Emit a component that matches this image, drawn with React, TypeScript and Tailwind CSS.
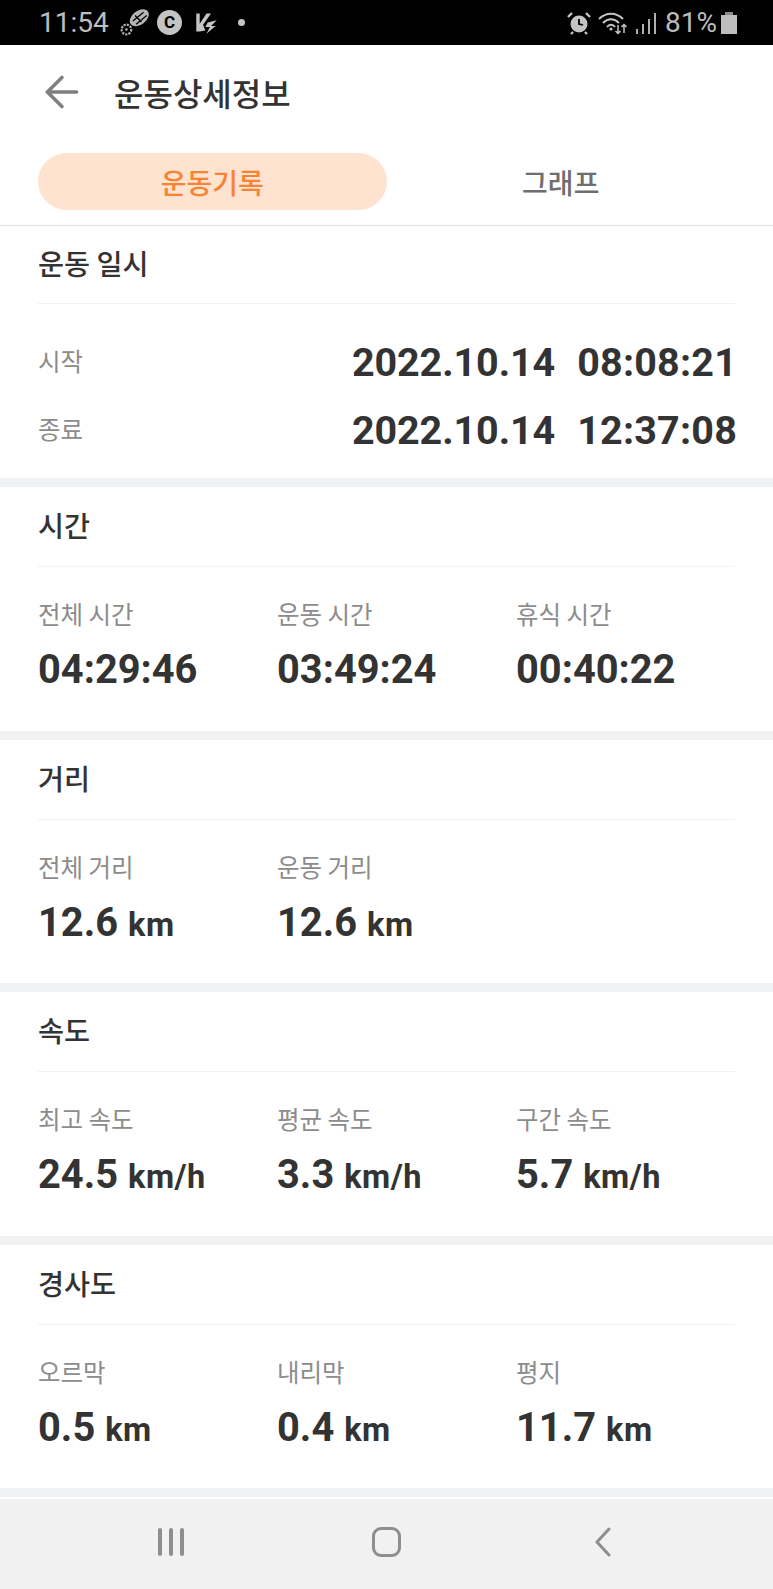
import { ArrowLeft } from "lucide-react";

const krFont = "font-['Noto_Sans_CJK_KR','Noto_Sans',sans-serif]";
const numFont = "font-['Roboto','Noto_Sans_CJK_KR',sans-serif]";

function StatusBar() {
  return (
    <div className="h-[45px] bg-black flex items-center justify-between pl-[39px] pr-[36px] text-[#bdbdbd] font-['Roboto',sans-serif]">
      <div className="flex items-center">
        <span className="text-[28px] leading-none w-[81px]">11:54</span>
        <svg width="30" height="28" viewBox="0 0 28 26" className="mt-[-2px]">
          <ellipse cx="18" cy="9" rx="10" ry="6.5" transform="rotate(-38 18 9)" fill="#b5b5b5" />
          <path d="M12 12 L22 4 M15 15 L25 7 M14 7 L20 13" stroke="#000" strokeWidth="1.2" />
          <circle cx="6" cy="20" r="4.5" fill="none" stroke="#b5b5b5" strokeWidth="2" strokeDasharray="2 1" />
          <circle cx="6" cy="20" r="1.2" fill="#b5b5b5" />
        </svg>
        <div className="ml-[7px] w-[25px] h-[25px] rounded-full bg-[#c4c4c4] flex items-center justify-center text-black text-[17px] font-bold leading-none">
          C
        </div>
        <svg width="25" height="25" viewBox="0 0 22 22" className="ml-[12px]">
          <path d="M2 3 L5 3 L5 19 L2 19 Z M5 12 L11 3 L15 3 L8 13 L10 18 L5 19 Z" fill="#c4c4c4" />
          <path d="M12 11 L20 9 L15 14 L19 14 L11 21 L14 15 L10 15 Z" fill="#c4c4c4" />
        </svg>
        <div className="ml-[19px] w-[7px] h-[7px] rounded-full bg-[#c4c4c4]" />
      </div>
      <div className="flex items-center">
        <svg width="26" height="24" viewBox="0 0 26 24" fill="none">
          <circle cx="13" cy="13" r="8.5" fill="#c4c4c4" />
          <path d="M13 8 L13 13 L17 14" stroke="#000" strokeWidth="1.8" />
          <path d="M2 6 L6 2 M24 6 L20 2 M7 21 L5 23 M19 21 L21 23" stroke="#c4c4c4" strokeWidth="2.4" />
        </svg>
        <svg width="32" height="24" viewBox="0 0 32 24" fill="none" className="ml-[5px]" stroke="#c4c4c4">
          <path d="M2 8 C9 1 19 1 26 8" strokeWidth="2" />
          <path d="M6 12 C11 7 17 7 22 12" strokeWidth="2" />
          <path d="M10 16 C12 13 16 13 18 16" strokeWidth="2" />
          <circle cx="14" cy="18" r="1.6" fill="#c4c4c4" stroke="none" />
          <path d="M21 14 V22 M18.5 20 L21 22.5 L23.5 20 M27 22 V14 M24.5 16 L27 13.5 L29.5 16" strokeWidth="1.5" />
        </svg>
        <div className="ml-[7px] flex items-end gap-[4px] h-[22px]">
          <div className="w-[2px] h-[5px] bg-[#b0b0b0]" />
          <div className="w-[2px] h-[10px] bg-[#b0b0b0]" />
          <div className="w-[2px] h-[15px] bg-[#b0b0b0]" />
          <div className="w-[2px] h-[21px] bg-[#b0b0b0]" />
        </div>
        <span className="ml-[9px] text-[28px] leading-none">81%</span>
        <div className="ml-[4px] flex flex-col items-center">
          <div className="w-[8px] h-[3px] bg-[#8a8a8a]" />
          <div className="w-[16px] h-[19px] bg-[#bdbdbd]" />
        </div>
      </div>
    </div>
  );
}

function SectionHead({ title, heightClass }: { title: string; heightClass: string }) {
  return (
    <div className={`mx-[38px] border-b border-[#f1f2f3] flex items-center pb-[2px] ${heightClass}`}>
      <h2 className={`text-[28.3px] leading-none font-medium text-[#333] ${krFont}`}>{title}</h2>
    </div>
  );
}

function Value({ num, unit }: { num: string; unit?: string }) {
  return (
    <div className={`text-[#333] font-bold leading-none whitespace-nowrap ${numFont}`}>
      <span className="text-[39.8px]">{num}</span>
      {unit && <span className="text-[32.5px] ml-[10px] tracking-[0.5px]">{unit}</span>}
    </div>
  );
}

function StatSection({ title, items }: { title: string; items: { label: string; num: string; unit?: string }[] }) {
  return (
    <section className="h-[243.5px] bg-white">
      <SectionHead title={title} heightClass="h-[80px]" />
      <div className="grid grid-cols-[239px_239px_1fr] pl-[38px] pt-[31px]">
        {items.map((it) => (
          <div key={it.label}>
            <div className={`text-[24.5px] leading-[32px] text-[#8c8c8c] ${krFont}`}>{it.label}</div>
            <div className="mt-[20px]">
              <Value num={it.num} unit={it.unit} />
            </div>
          </div>
        ))}
      </div>
    </section>
  );
}

function DateRow({ label, date, time }: { label: string; date: string; time: string }) {
  return (
    <div className="flex items-center justify-between h-[68px]">
      <span className={`text-[24.5px] leading-none text-[#8c8c8c] pb-[4px] ${krFont}`}>{label}</span>
      <div className={`flex gap-[22px] mr-[-2px] text-[39.5px] leading-none font-bold text-[#333] ${numFont}`}>
        <span className="tracking-[-0.1px]">{date}</span>
        <span className="tracking-[0.2px]">{time}</span>
      </div>
    </div>
  );
}

const Band = () => <div className="h-[9px] bg-[#f1f2f3]" />;

export default function App() {
  return (
    <div className="w-[773px] h-[1589px] bg-white flex flex-col overflow-hidden">
      <StatusBar />

      {/* Header */}
      <header className="h-[108px] flex items-center pl-[37px] pb-[14px]">
        <ArrowLeft size={50} strokeWidth={1.7} className="text-[#808080]" />
        <h1 className={`ml-[27px] text-[32px] leading-none font-medium text-[#333] ${krFont}`}>운동상세정보</h1>
      </header>

      {/* Tabs */}
      <div className={`h-[73px] px-[38px] border-b border-[#dfe0e1] ${krFont}`}>
        <div className="grid grid-cols-2 h-[57px]">
          <div className="rounded-full bg-[#fee3d0] text-[#f98233] text-[28px] font-medium flex items-center justify-center">
            운동기록
          </div>
          <div className="text-[#6e6e6e] text-[28px] font-medium flex items-center justify-center">그래프</div>
        </div>
      </div>

      {/* 운동 일시 */}
      <section className="h-[252px]">
        <SectionHead title="운동 일시" heightClass="h-[78px]" />
        <div className="mx-[38px] pt-[25px]">
          <DateRow label="시작" date="2022.10.14" time="08:08:21" />
          <DateRow label="종료" date="2022.10.14" time="12:37:08" />
        </div>
      </section>
      <Band />

      <StatSection
        title="시간"
        items={[
          { label: "전체 시간", num: "04:29:46" },
          { label: "운동 시간", num: "03:49:24" },
          { label: "휴식 시간", num: "00:40:22" },
        ]}
      />
      <Band />
      <StatSection
        title="거리"
        items={[
          { label: "전체 거리", num: "12.6", unit: "km" },
          { label: "운동 거리", num: "12.6", unit: "km" },
        ]}
      />
      <Band />
      <StatSection
        title="속도"
        items={[
          { label: "최고 속도", num: "24.5", unit: "km/h" },
          { label: "평균 속도", num: "3.3", unit: "km/h" },
          { label: "구간 속도", num: "5.7", unit: "km/h" },
        ]}
      />
      <Band />
      <StatSection
        title="경사도"
        items={[
          { label: "오르막", num: "0.5", unit: "km" },
          { label: "내리막", num: "0.4", unit: "km" },
          { label: "평지", num: "11.7", unit: "km" },
        ]}
      />
      <Band />

      {/* Android nav bar */}
      <nav className="mt-[2px] flex-1 bg-[#f1f1f1] flex items-center justify-center">
        <div className="grid grid-cols-3 w-[648px] items-center justify-items-center pb-[4px]">
          <div className="flex gap-[7px]">
            <div className="w-[4px] h-[28px] rounded-full bg-[#8e8e8e]" />
            <div className="w-[4px] h-[28px] rounded-full bg-[#8e8e8e]" />
            <div className="w-[4px] h-[28px] rounded-full bg-[#8e8e8e]" />
          </div>
          <div className="w-[29px] h-[30px] rounded-[9px] border-[3px] border-[#8e8e8e]" />
          <svg width="18" height="30" viewBox="0 0 18 30" fill="none">
            <path d="M15 2 L3 15 L15 28" stroke="#8e8e8e" strokeWidth="3" strokeLinecap="round" strokeLinejoin="round" />
          </svg>
        </div>
      </nav>
    </div>
  );
}
